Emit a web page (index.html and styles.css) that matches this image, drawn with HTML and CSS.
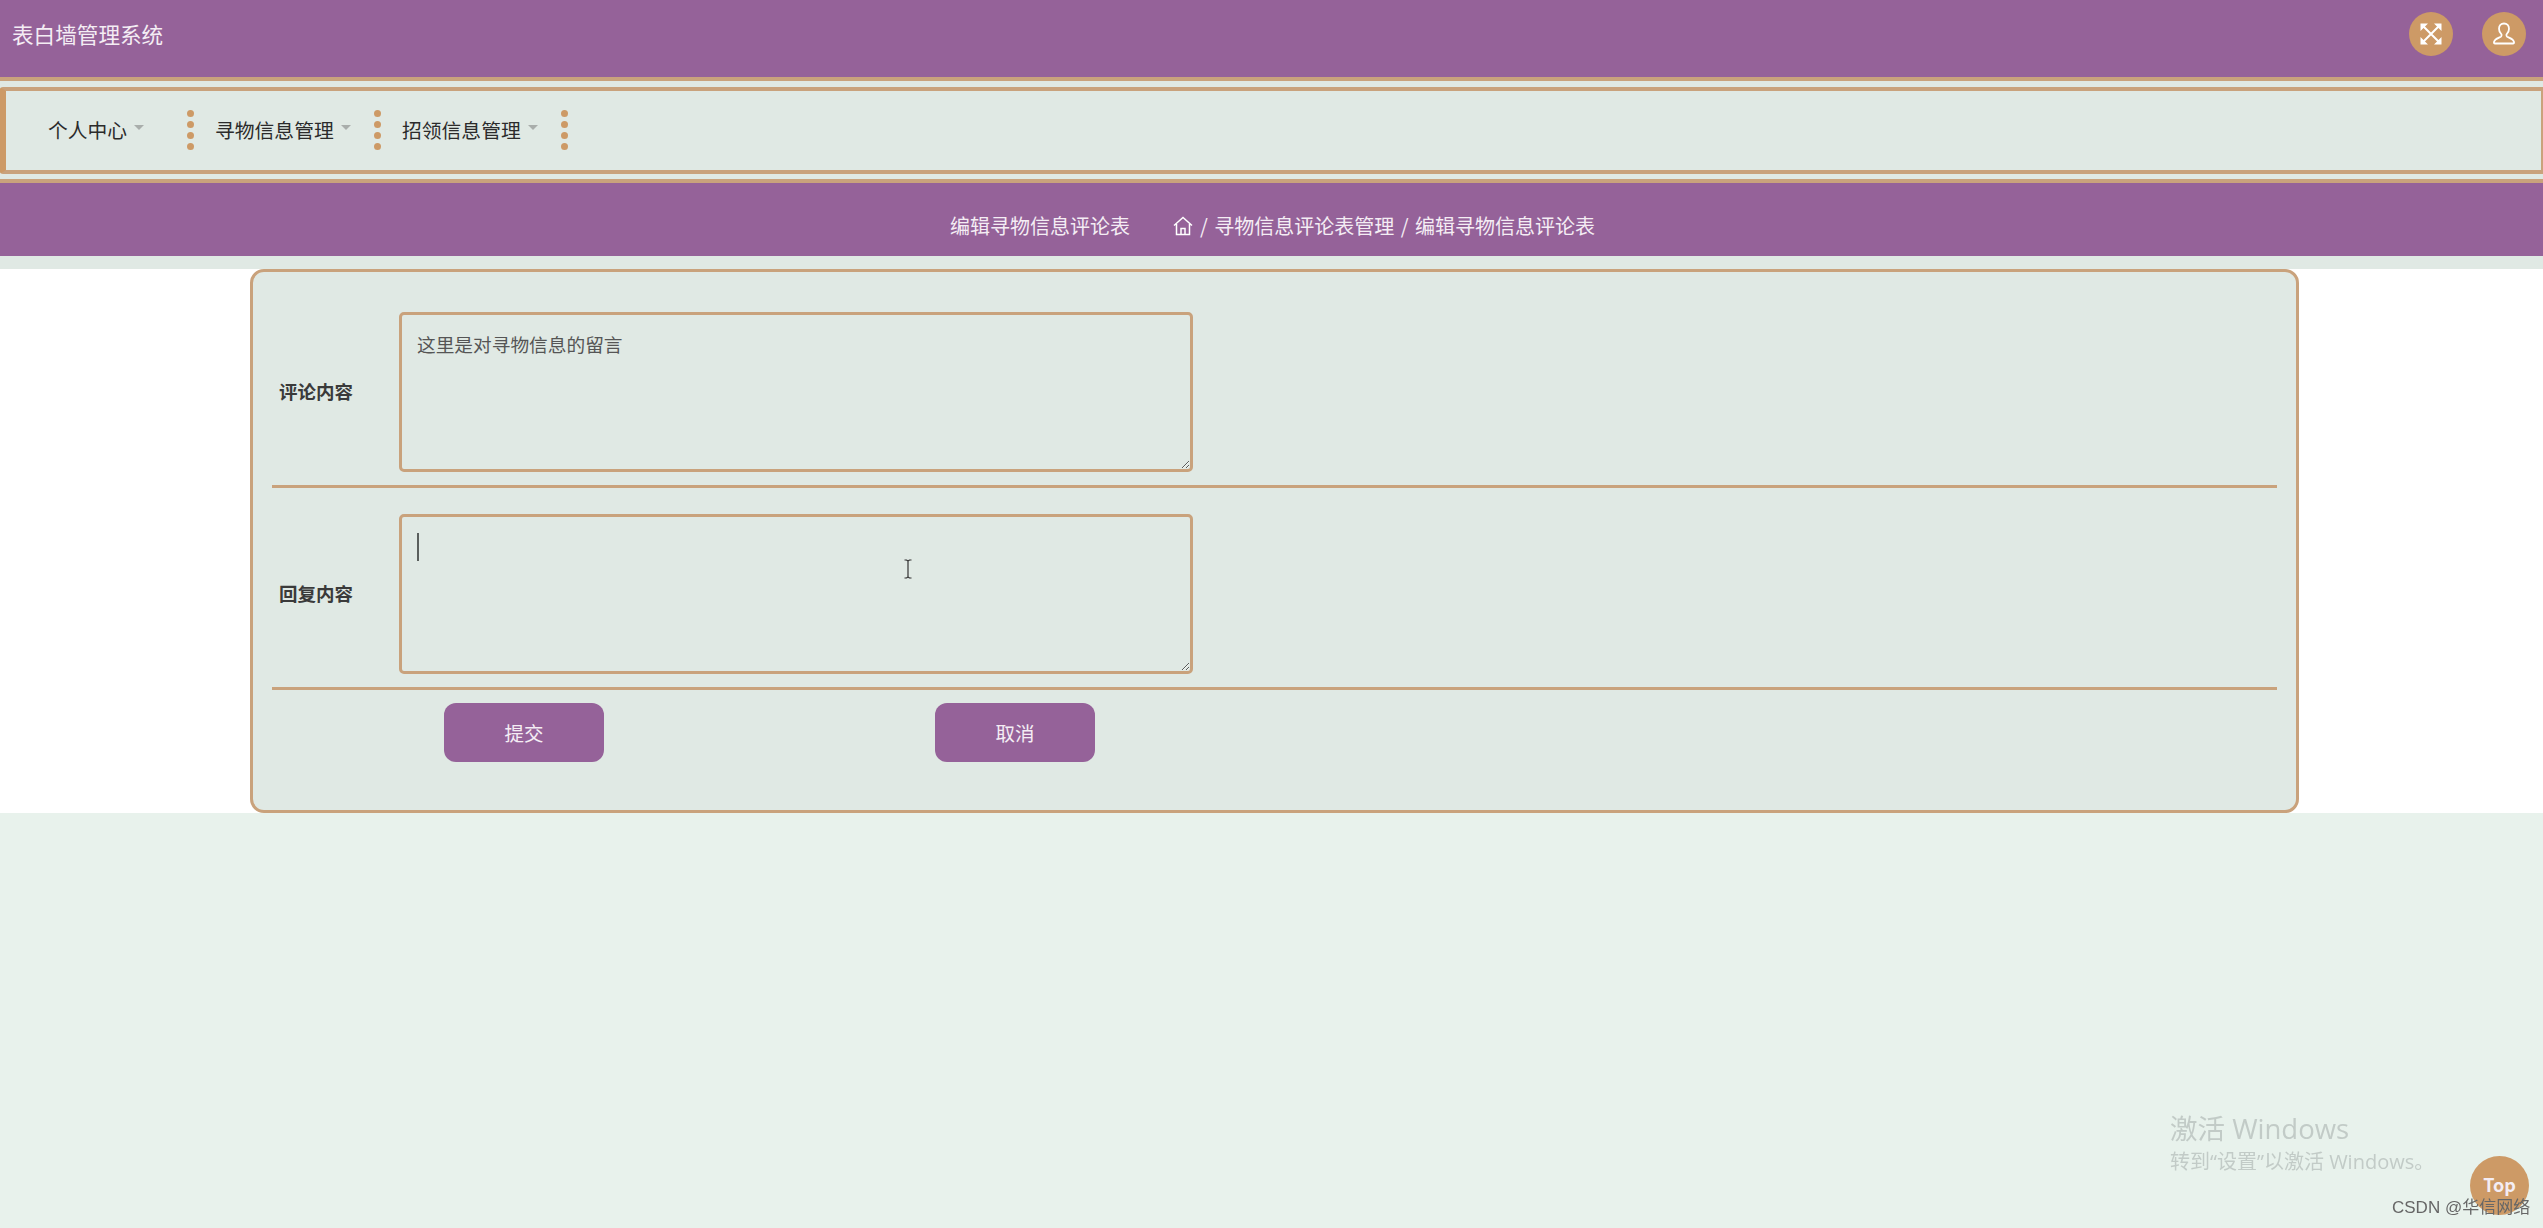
FILE: index.html
```html
<!DOCTYPE html>
<html lang="zh-CN">
<head>
<meta charset="utf-8">
<title>表白墙管理系统</title>
<link rel="stylesheet" href="styles.css">
</head>
<body>
<div class="page">
  <header class="topbar">
    <div class="brand">表白墙管理系统</div>
    <div class="top-actions">
      <span class="round-btn">
        <svg class="round-icon" viewBox="0 0 24 24" fill="none" stroke="#fff" stroke-width="2"><path d="M3.500 3.500L20.500 20.500M20.500 3.500L3.500 20.500"/><path d="M1.500 9V1.500H9zM22.500 9V1.500H15zM1.500 15v7.500H9zM22.500 15v7.500H15z" fill="#fff" stroke="none"/></svg>
      </span>
      <span class="round-btn">
        <svg class="round-icon" viewBox="0 0 24 24" fill="none" stroke="#fff" stroke-width="1.800"><path d="M12 1.500c-3 0-5 2.200-5 5.300 0 2.300 1 4.200 2.300 5.300.4.400.4 1.900-.3 2.500-1.500 1.200-6.300 2-7 5.400-.2 1 .2 1.500 1 1.500h18c.8 0 1.200-.5 1-1.500-.7-3.400-5.500-4.200-7-5.400-.7-.6-.7-2.100-.3-2.500C16 11 17 9.100 17 6.800c0-3.100-2-5.300-5-5.300z"/></svg>
      </span>
    </div>
  </header>

  <div class="nav-band">
    <nav class="nav">
      <div class="nav-item nav-item-first"><span>个人中心</span><i class="caret"></i><span class="dots"><i></i><i></i><i></i><i></i></span></div>
      <div class="nav-item"><span>寻物信息管理</span><i class="caret"></i><span class="dots"><i></i><i></i><i></i><i></i></span></div>
      <div class="nav-item"><span>招领信息管理</span><i class="caret"></i><span class="dots"><i></i><i></i><i></i><i></i></span></div>
    </nav>
  </div>

  <div class="crumb-bar">
    <span class="crumb-title">编辑寻物信息评论表</span>
    <span class="crumbs">
      <svg class="home-icon" viewBox="0 0 20 20" fill="none" stroke="#fff" stroke-width="1.500"><path d="M1 9.500L10 1.500l9 8M3.500 8v10.500h13V8M8 18.500v-6h4v6"/></svg>
      <span>/ 寻物信息评论表管理 / 编辑寻物信息评论表</span>
    </span>
  </div>

  <div class="strip"></div>

  <main class="sheet">
    <form class="card">
      <div class="row">
        <label class="row-label">评论内容</label>
        <textarea class="field">这里是对寻物信息的留言</textarea>
      </div>
      <div class="row">
        <label class="row-label">回复内容</label>
        <div class="field-wrap">
          <textarea class="field"></textarea>
          <i class="text-caret"></i>
          <svg class="ibeam" viewBox="0 0 10 20" fill="none" stroke="#333" stroke-width="1.200"><path d="M1.500 1h2l1.500 1 1.500-1h2M5 2v16M1.500 19h2l1.500-1 1.500 1h2"/></svg>
        </div>
      </div>
      <div class="actions">
        <button type="button" class="btn">提交</button>
        <button type="button" class="btn">取消</button>
      </div>
    </form>
  </main>

  <div class="rest"></div>
</div>

<div class="activate">
  <div class="activate-title">激活 Windows</div>
  <div class="activate-sub">转到“设置”以激活 Windows。</div>
</div>
<div class="to-top">Top</div>
<div class="watermark">CSDN @华信网络</div>
</body>
</html>
```

FILE: styles.css
```css
* { box-sizing: border-box; }
html, body { margin: 0; height: 100%; overflow: hidden; }
body {
  font-family: "Noto Sans CJK SC", "Noto Sans", sans-serif;
  background: #e8f2ec;
  color: #333;
}
.page { display: flex; flex-direction: column; height: 100vh; }

.topbar {
  height: 77px;
  flex: none;
  background: #956299;
  display: flex;
  align-items: center;
  justify-content: space-between;
  padding: 0 17px 10px 12px;
}
.brand { color: #f4edf4; font-size: 21.6px; line-height: 30px; }
.top-actions { display: flex; gap: 29px; }
.round-btn {
  width: 44px;
  height: 44px;
  border-radius: 50%;
  background: #cd9a66;
  display: flex;
  align-items: center;
  justify-content: center;
}
.round-icon { width: 24px; height: 24px; }

.nav-band {
  flex: none;
  height: 106px;
  background: #e0e9e4;
  border-top: 4px solid #c9a27c;
  border-bottom: 4px solid #c9a27c;
  padding: 6px 0 5px;
}
.nav {
  height: 87px;
  border: 4px solid #c9a27c;
  border-left: 6px solid #cd9a66;
  border-right-width: 2px;
  border-radius: 3px 0 0 3px;
  padding: 0 0 3px 42px;
  display: flex;
  align-items: center;
}
.nav-item {
  width: 187px;
  padding-right: 21px;
  display: flex;
  align-items: center;
  font-size: 19.800px;
  color: #2b2b2b;
}
.nav-item-first { width: 167px; }
.caret {
  margin: 0 0 4px 7px;
  width: 0;
  height: 0;
  border-left: 5px solid transparent;
  border-right: 5px solid transparent;
  border-top: 5px solid #a9aeab;
}
.dots {
  margin-left: auto;
  display: flex;
  flex-direction: column;
  gap: 4px;
  position: relative;
  top: 1px;
}
.dots i {
  display: block;
  width: 7px;
  height: 7px;
  border-radius: 50%;
  background: #cd9a66;
}

.crumb-bar {
  flex: none;
  height: 73px;
  background: #956299;
  color: #f4edf4;
  font-size: 20px;
  display: flex;
  align-items: center;
  padding: 12px 0 0 950px;
  word-spacing: 2px;
}
.crumb-title { width: 223px; }
.crumbs { display: flex; align-items: center; gap: 7px; }
.home-icon { width: 20px; height: 20px; }
.strip { flex: none; height: 13px; background: #e0e9e4; }

.sheet { flex: none; background: #fff; padding-left: 250px; }
.card {
  width: 2049px;
  height: 544px;
  background: #e0e9e4;
  border: 3px solid #c9a27c;
  border-radius: 14px;
  padding: 14px 19px 0;
}
.row {
  display: flex;
  align-items: center;
  padding: 26px 0 13px;
  border-bottom: 3px solid #c9a27c;
}
.row-label {
  width: 127px;
  padding: 0 0 3px 7px;
  font-size: 18.500px;
  font-weight: 700;
  color: #3a3a3a;
  line-height: 26px;
}
.field-wrap { position: relative; display: flex; }
.field {
  display: block;
  width: 794px;
  height: 160px;
  background: #e0e9e4;
  border: 3px solid #c9a27c;
  border-radius: 5px;
  padding: 16px 15px;
  outline: none;
  font-family: inherit;
  font-size: 18.700px;
  line-height: 26px;
  color: #555;
}
.text-caret {
  position: absolute;
  left: 18px;
  top: 19px;
  width: 2px;
  height: 28px;
  background: #5a5f5d;
}
.ibeam {
  position: absolute;
  left: 504px;
  top: 44px;
  width: 10px;
  height: 22px;
}
.actions {
  display: flex;
  gap: 331px;
  padding: 13px 0 0 172px;
}
.btn {
  width: 160px;
  height: 59px;
  border: 0;
  border-radius: 12px;
  background: #956299;
  color: #f4edf4;
  font-family: inherit;
  font-size: 19.500px;
  padding: 0;
}
.rest { flex: 1; background: #e8f2ec; }

.activate {
  position: fixed;
  left: 2170px;
  top: 1109px;
  color: #c2cbc7;
  font-family: "Open Sans", "Noto Sans CJK SC", sans-serif;
}
.activate-title { font-size: 27.500px; line-height: 40px; }
.activate-sub { font-size: 20px; line-height: 26px; }
.to-top {
  position: fixed;
  left: 2470px;
  top: 1156px;
  width: 59px;
  height: 59px;
  border-radius: 50%;
  background: #cd9a66;
  color: #f4edf4;
  font-size: 18px;
  font-weight: 700;
  display: flex;
  align-items: center;
  justify-content: center;
  padding-bottom: 4px;
}
.watermark {
  position: fixed;
  left: 2392px;
  top: 1195px;
  color: #666;
  font-family: "Liberation Sans", "Noto Sans CJK SC", sans-serif;
  font-size: 17px;
  line-height: 26px;
  white-space: nowrap;
}
```
